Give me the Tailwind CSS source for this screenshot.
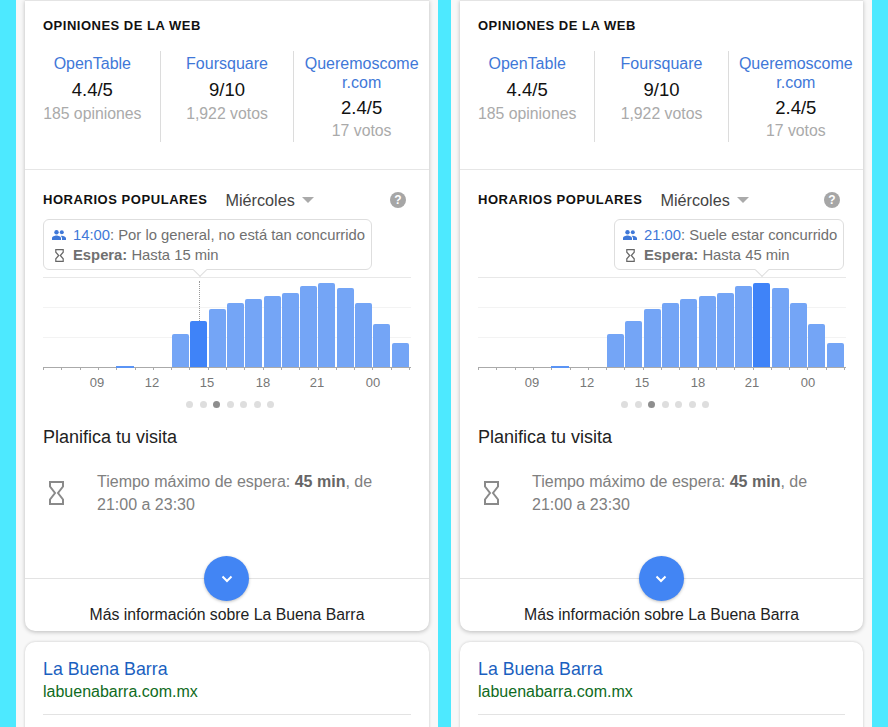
<!DOCTYPE html>
<html lang="es">
<head>
  <meta charset="UTF-8" />
  <title>Horarios populares</title>
  <script src="https://cdn.jsdelivr.net/npm/@tailwindcss/browser@4"></script>
</head>
<body class="bg-[#4de9ff] font-['Liberation_Sans',Arial,sans-serif]">
  <div class="w-[888px] h-[727px] overflow-hidden pl-[16px] flex gap-[13px]">
    <div id="left" class="w-[422px] shrink-0"></div>
    <div id="right" class="w-[421px] shrink-0"></div>
  </div>

  <template id="phone">
    <div class="h-[727px] bg-[#f8f8f8] px-[9px] overflow-hidden">
      <div class="bg-white rounded-b-[10px] border-t border-[#e4e4e4] shadow-[0_1px_4px_rgba(0,0,0,0.25)] h-[631px] flex flex-col">
        <section class="h-[169px] shrink-0 border-b border-[#e6e6e6] pt-[17px]">
          <h3 class="px-[18px] text-[13px] leading-[15px] font-bold tracking-[0.5px] text-[#111]">OPINIONES DE LA WEB</h3>
          <div class="grid grid-cols-3 mt-[18px]">
            <div class="h-[91px] text-center pt-[3px]">
              <div class="text-[16px] leading-[19px] text-[#3f78d8]">OpenTable</div>
              <div class="text-[18.5px] leading-[20px] mt-[7px] text-[#111]">4.4/5</div>
              <div class="text-[15.8px] leading-[18px] mt-[5px] text-[#aaa]">185 opiniones</div>
            </div>
            <div class="h-[91px] text-center pt-[3px] border-x border-[#dcdcdc]">
              <div class="text-[16px] leading-[19px] text-[#3f78d8]">Foursquare</div>
              <div class="text-[18.5px] leading-[20px] mt-[7px] text-[#111]">9/10</div>
              <div class="text-[15.8px] leading-[18px] mt-[5px] text-[#aaa]">1,922 votos</div>
            </div>
            <div class="h-[91px] text-center pt-[3px]">
              <div class="text-[16px] leading-[19px] text-[#3f78d8]">Queremoscome<br>r.com</div>
              <div class="text-[18.5px] leading-[20px] mt-[6px] text-[#111]">2.4/5</div>
              <div class="text-[15.8px] leading-[18px] mt-[4px] text-[#aaa]">17 votos</div>
            </div>
          </div>
        </section>

        <section class="relative px-[18px] flex-1">
          <div class="flex items-center h-[20px] mt-[20px]">
            <h3 class="text-[13px] font-bold tracking-[0.55px] text-[#111]">HORARIOS POPULARES</h3>
            <span class="ml-[18px] text-[16.2px] text-[#444]">Miércoles</span>
            <span class="ml-[7px] w-0 h-0 border-x-[6px] border-x-transparent border-t-[6px] border-t-[#aaa]"></span>
            <span class="ml-auto mr-[5px] w-[16px] h-[16px] rounded-full bg-[#a6a6a6] text-white text-[12px] font-bold leading-[16px] text-center">?</span>
          </div>

          <div data-slot="chart" class="relative mt-[67px] h-[90px] w-[368px]"></div>
          <div data-slot="axis" class="relative h-[26px] w-[368px] text-[13px] text-[#777]"></div>

          <div class="flex gap-[6.5px] justify-center mt-[8px] w-[368px] ml-[3px]" data-slot="dots"></div>

          <h4 class="text-[18px] leading-[22px] mt-[18px] text-[#222]">Planifica tu visita</h4>
          <div class="flex mt-[22px]">
            <svg class="mt-[11px] ml-[6px] shrink-0" width="15" height="24" viewBox="0 0 15 24" fill="none" stroke="#8a8a8a" stroke-width="2"><path d="M1 1h13v4.500L9 12l5 6.500V23H1v-4.500L6 12 1 5.500z"/></svg>
            <p class="ml-[33px] text-[16px] leading-[23px] text-[#808080] w-[300px]">Tiempo máximo de espera: <b class="text-[#666]">45 min</b>, de 21:00 a 23:30</p>
          </div>

          <div data-slot="tip"></div>
        </section>

        <div class="relative h-[53px] shrink-0 border-t border-[#e3e3e3] text-center pt-[27px] text-[15.8px] leading-[18px] text-[#222]">
          <span class="absolute left-1/2 -ml-[23px] -top-[23px] w-[45px] h-[45px] rounded-full bg-[#4285f4] shadow-[0_1px_3px_rgba(0,0,0,0.25)] flex items-center justify-center">
            <svg width="12" height="8" viewBox="0 0 12 8" fill="none" stroke="#fff" stroke-width="2"><path d="M1.500 1.500 6 6l4.500-4.500"/></svg>
          </span>
          Más información sobre La Buena Barra
        </div>
      </div>

      <div class="bg-white rounded-t-[10px] shadow-[0_0_3px_rgba(0,0,0,0.2)] mt-[11px] h-[100px] px-[18px] pt-[16px]">
        <div class="text-[17.8px] leading-[22px] text-[#1a5fc0]">La Buena Barra</div>
        <div class="text-[16px] leading-[22px] mt-[1px] text-[#0f6b22]">labuenabarra.com.mx</div>
        <div class="border-t border-[#e3e3e3] mt-[11px]"></div>
      </div>
    </div>
  </template>

  <script>
    // bar heights, left to right, from 13:00 on
    const heights = [33, 46, 58, 64, 68, 71, 74, 81, 84, 79, 64, 43, 24];
    const hours = [["09", 54], ["12", 109], ["15", 164], ["18", 220], ["21", 274], ["00", 330]];

    function people(color) {
      return `<svg width="14" height="10" viewBox="0 0 14 10" fill="${color}"><circle cx="4.500" cy="2.300" r="2.200"/><circle cx="9.800" cy="2.300" r="2"/><path d="M0 10V8.300C0 6.500 2.800 5.600 4.500 5.600s4.500 .9 4.500 2.700V10zM10 10V8.300c0-1-.5-1.800-1.300-2.400.4-.1.9-.2 1.200-.2 1.600 0 4.100.8 4.100 2.600V10z"/></svg>`;
    }

    function hourglass() {
      return `<svg width="9" height="13" viewBox="0 0 9 13" fill="none" stroke="#666" stroke-width="1.200"><path d="M.8.700h7.400v2.500L5.300 6.500l2.900 3.300v2.500H.8V9.800l2.900-3.300L.8 3.200z"/></svg>`;
    }

    function buildPhone(host, opt) {
      const frag = document.getElementById("phone").content.cloneNode(true);

      const chart = frag.querySelector('[data-slot="chart"]');
      [0, 30, 60].forEach(top => {
        const line = document.createElement("div");
        line.className = "absolute left-0 right-0 h-px " + (top === 0 ? "bg-[#e8e8e8]" : "bg-[#f3f3f3]");
        line.style.top = top + "px";
        chart.appendChild(line);
      });
      heights.forEach((h, i) => {
        const bar = document.createElement("div");
        bar.className = "absolute bottom-0 w-[17px] rounded-t-[2px] " + (i === opt.active ? "bg-[#3f83f8]" : "bg-[#74a5f6]");
        bar.style.left = (129 + i * 18.3) + "px";
        bar.style.height = h + "px";
        chart.appendChild(bar);
      });
      if (opt.guide) {
        const guide = document.createElement("div");
        guide.className = "absolute w-0 top-[4px] border-l border-dotted border-[#999]";
        guide.style.left = "156px";
        guide.style.height = "40px";
        chart.appendChild(guide);
      }

      const axis = frag.querySelector('[data-slot="axis"]');
      const base = document.createElement("div");
      base.className = "absolute left-0 right-0 top-0 h-px bg-[#aaa]";
      axis.appendChild(base);
      for (let i = 0; i <= 20; i++) {
        const tick = document.createElement("div");
        tick.className = "absolute top-0 w-px h-[3px] bg-[#aaa]";
        tick.style.left = i * 18.3 + "px";
        axis.appendChild(tick);
      }
      const small = document.createElement("div");
      small.className = "absolute -top-px h-[2px] w-[18px] bg-[#5a94f5]";
      small.style.left = "73px";
      axis.appendChild(small);
      hours.forEach(([label, x]) => {
        const t = document.createElement("span");
        t.className = "absolute top-[8px] leading-[15px] -translate-x-1/2";
        t.style.left = x + "px";
        t.textContent = label;
        axis.appendChild(t);
      });

      const dots = frag.querySelector('[data-slot="dots"]');
      for (let i = 0; i < 7; i++) {
        const d = document.createElement("span");
        d.className = "w-[7px] h-[7px] rounded-full " + (i === 2 ? "bg-[#8e8e8e]" : "bg-[#dedede]");
        dots.appendChild(d);
      }

      const tip = document.createElement("div");
      tip.className = "absolute top-[49px] h-[51px] bg-white border border-[#dedede] rounded-[6px] pl-[8px] text-[14.8px] leading-[20px] text-[#707070] pt-[5px]";
      tip.style.left = opt.tipLeft + "px";
      tip.style.width = opt.tipWidth + "px";
      tip.innerHTML = `<div class="flex items-center gap-[7px] whitespace-nowrap">${people("#3f78d8")}<span><span class="text-[#3f78d8]">${opt.time}</span>: ${opt.text}</span></div>
        <div class="flex items-center whitespace-nowrap"><span class="w-[14px] flex justify-center">${hourglass()}</span><span class="ml-[7px]"><b>Espera:</b> ${opt.wait}</span></div>
        <span class="absolute -bottom-[6px] w-[10px] h-[10px] bg-white border-r border-b border-[#dedede] rotate-45" style="left:${opt.arrow}px"></span>`;
      frag.querySelector('[data-slot="tip"]').appendChild(tip);

      host.appendChild(frag);
    }

    buildPhone(document.getElementById("left"), {
      active: 1, guide: true, tipLeft: 18, tipWidth: 329, arrow: 151,
      time: "14:00", text: "Por lo general, no está tan concurrido", wait: "Hasta 15 min"
    });
    buildPhone(document.getElementById("right"), {
      active: 8, guide: false, tipLeft: 154, tipWidth: 230, arrow: 142,
      time: "21:00", text: "Suele estar concurrido", wait: "Hasta 45 min"
    });
  </script>
</body>
</html>
